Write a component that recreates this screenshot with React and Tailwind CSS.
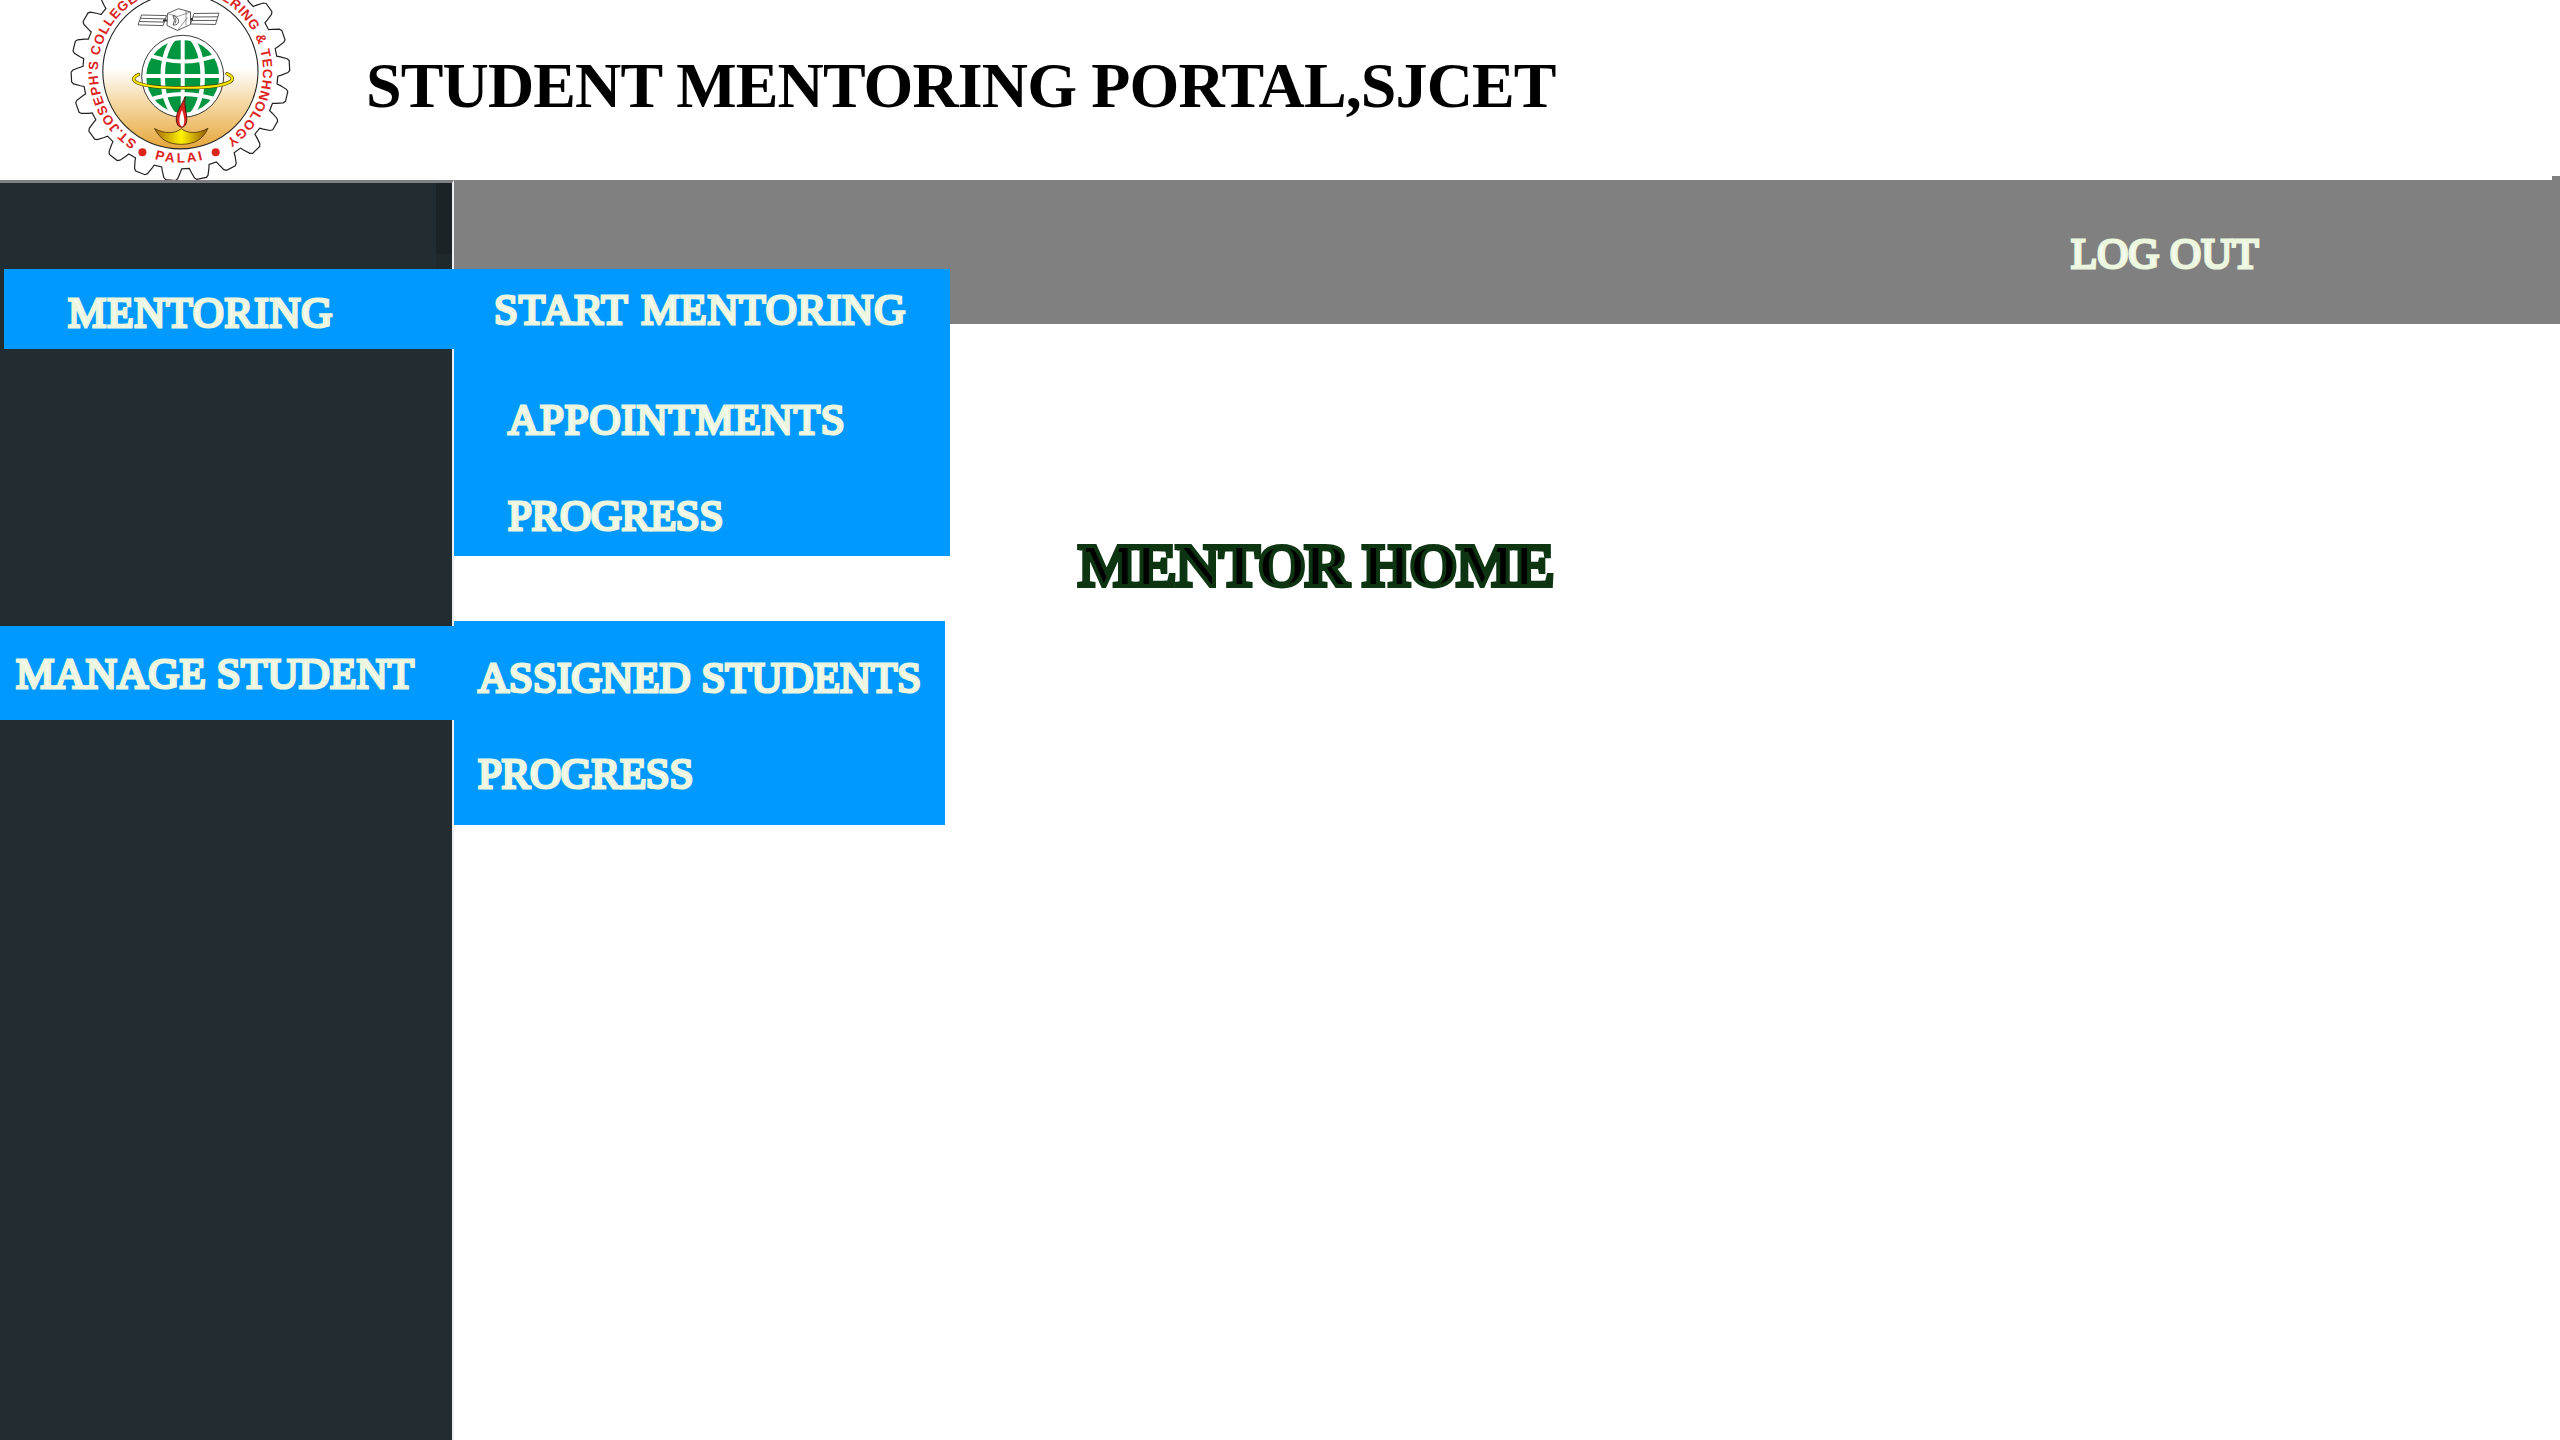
import React from "react";

const CX = 180.4;
const CY = 71.3;

function polar(r, deg) {
  const a = (deg * Math.PI) / 180;
  return `${(CX + r * Math.sin(a)).toFixed(2)} ${(CY + r * Math.cos(a)).toFixed(2)}`;
}

function gearPath() {
  const step = 360 / 22;
  const points = [];
  for (let i = 0; i < 22; i++) {
    const c = 11.2 + i * step;
    points.push(polar(97.5, c - 5.9), polar(101, c - 5.2), polar(107.5, c - 3.7), polar(109.3, c - 2.6));
    points.push(polar(109.3, c + 2.6), polar(107.5, c + 3.7), polar(101, c + 5.2), polar(97.5, c + 5.9));
  }
  return `M${points.join("L")}Z`;
}

function Logo() {
  return (
    <svg className="block h-[180px] w-[300px]" viewBox="0 0 300 180">
      <defs>
        <linearGradient id="disc" x1="0" y1="0" x2="0" y2="1">
          <stop offset="0.48" stopColor="#ffffff" />
          <stop offset="0.7" stopColor="#f5d9a6" />
          <stop offset="1" stopColor="#e6a63a" />
        </linearGradient>
        <linearGradient id="lamp" x1="0" y1="0" x2="1" y2="0">
          <stop offset="0" stopColor="#a5680c" />
          <stop offset="0.5" stopColor="#fff200" />
          <stop offset="1" stopColor="#8f5606" />
        </linearGradient>
        <clipPath id="globe">
          <circle cx="182.7" cy="76.5" r="37" />
        </clipPath>
        <path id="ring-top" d={`M${polar(82.6, -31.5)}A82.6 82.6 0 1 1 ${polar(82.6, 32)}`} />
        <path id="ring-bottom" d={`M${polar(91.3, -16.5)}A91.3 91.3 0 0 0 ${polar(91.3, 20)}`} />
      </defs>

      <path d={gearPath()} fill="#fff" stroke="#222" strokeWidth="1.2" />
      <circle cx={CX} cy={CY} r="77.6" fill="url(#disc)" stroke="#222" strokeWidth="1.1" />

      <g fill="#dc241f" fontFamily="'Liberation Sans', Arial, sans-serif" fontWeight="700" fontSize="13.4">
        <text>
          <textPath href="#ring-top" textLength="424" lengthAdjust="spacing">
            ST.JOSEPH'S COLLEGE OF ENGINEERING &amp; TECHNOLOGY
          </textPath>
        </text>
        <text>
          <textPath href="#ring-bottom" textLength="49" lengthAdjust="spacing">PALAI</textPath>
        </text>
        <circle cx="142.4" cy="152.3" r="4" />
        <circle cx="215.7" cy="152.3" r="4" />
      </g>

      <g fill="#fff" stroke="#333" strokeWidth="0.8">
        <path d="M141.5 15l25 .6-3.5 10-25-.7zM140.5 18.3l25 .6M139.5 21.5l25 .6" />
        <path d="M194 13.5l25-.3-3.5 11.3-25-.5zM193 17l25-.2M192 20.5l25-.1" />
        <path d="M163 20.500h5M188 19h5" strokeWidth="2" />
        <path d="M167.500 13.500l11-4.800 12 3.300v12.500l-13 6-10.500-5z" />
        <path d="M167.500 13.500l10 3 13-4.500M177.500 30.500l10-13M186 10.500v15" strokeWidth="0.5" />
        <path d="M173 15.500q6 2 5.500 6t-5.500 3.500q3-4.500 0-9.500M175 17.500q2 3 0 6" />
      </g>

      <circle cx="182.7" cy="76.3" r="41" fill="#fff" stroke="#222" strokeWidth="0.9" />
      <circle cx="182.7" cy="76.5" r="36.5" fill="#00953f" />
      <g clipPath="url(#globe)" fill="none" stroke="#fff" strokeWidth="4">
        <path d="M182.700 35v83M144 76h78" />
        <ellipse cx="182.700" cy="76.500" rx="20" ry="42" strokeWidth="4.500" />
        <path d="M146 54q36.700 15 74 0M146 101q36.700 -14 74 0" strokeWidth="4" />
      </g>

      <path
        d="M138.500 74.500c-12 5.500 -3 13.300 44.500 13.300s57 -8.300 44 -14"
        fill="none"
        stroke="#4a4300"
        strokeWidth="3.400"
        strokeLinecap="round"
      />
      <path
        d="M138.500 74.500c-12 5.500 -3 13.300 44.500 13.300s57 -8.300 44 -14"
        fill="none"
        stroke="#f7e600"
        strokeWidth="2.100"
        strokeLinecap="round"
      />

      <path
        d="M154.500 128.500c10 5.500 20 5.500 26.800 .2c7 5.300 17 5 26.700 -.4c-5 11 -13 16 -27 16s-21 -5.500 -26.500 -15.800z"
        fill="url(#lamp)"
        stroke="#4a3200"
        strokeWidth="0.8"
      />
      <path d="M185 97c-3 7 -8.700 15 -8.700 22c0 11 10.500 11 10.500 0c0 -7 -3 -13 -1.800 -22z" fill="#dc241f" stroke="#4d0a08" strokeWidth="0.9" />
      <path d="M182 110c-3 6 -3.800 15 0 16.500c3.500 -1.500 2.500 -10 0 -16.500z" fill="#fff" />
    </svg>
  );
}

const MENU_TEXT = "block whitespace-nowrap text-[43px] leading-none text-white [-webkit-text-stroke:3px_#ecf6df]";

export default function App() {
  return (
    <div className="flex h-[1440px] w-[2560px] flex-col overflow-hidden bg-white font-['Liberation_Serif',serif]">
      <header className="relative flex h-[180px] shrink-0">
        <Logo />
        <h1 className="ml-[66px] mt-[54px] whitespace-nowrap text-[64px] font-bold leading-none tracking-[-0.87px] text-black">
          STUDENT MENTORING PORTAL,SJCET
        </h1>
        <span className="absolute bottom-0 right-0 h-1 w-2 bg-[#808080]" />
      </header>

      <div className="flex flex-1">
        <aside className="relative z-10 flex w-[454px] shrink-0 flex-col border-r-2 border-t-[3px] border-r-[#eceef2] border-t-[#808080] bg-[#222d32]">
          <div className="ml-[436px] h-[71px] w-4 bg-[#1c2326]" />
          <div className="ml-[436px] h-[15px] w-4 bg-[#1f282b]" />

          <nav>
            <div className="relative ml-1 h-20 w-[450px] bg-[#0099ff] pl-[64px] pt-[22px]">
              <span className={`${MENU_TEXT} tracking-[0.9px]`}>MENTORING</span>
              <div className="absolute left-full top-0 h-[287px] w-[496px] bg-[#0099ff]">
                <span className={`${MENU_TEXT} ml-[40px] mt-[19px] tracking-[0.85px] [word-spacing:2px]`}>START MENTORING</span>
                <span className={`${MENU_TEXT} ml-[54px] mt-[67px] tracking-[0.85px]`}>APPOINTMENTS</span>
                <span className={`${MENU_TEXT} ml-[54px] mt-[53px] tracking-[-0.3px]`}>PROGRESS</span>
              </div>
            </div>

            <div className="relative mt-[277px] h-[94px] w-[454px] bg-[#0099ff] pl-[16px] pt-[26px]">
              <span className={`${MENU_TEXT} tracking-[0.2px]`}>MANAGE STUDENT</span>
              <div className="absolute -top-[5px] left-full h-[204px] w-[491px] bg-[#0099ff]">
                <span className={`${MENU_TEXT} ml-[24px] mt-[35px] tracking-[0px]`}>ASSIGNED STUDENTS</span>
                <span className={`${MENU_TEXT} ml-[24px] mt-[53px] tracking-[-0.3px]`}>PROGRESS</span>
              </div>
            </div>
          </nav>
        </aside>

        <main className="flex-1">
          <div className="flex h-36 justify-end bg-[#808080] pr-[300px] pt-[52px]">
            <div className="w-[189px]">
              <span className={`${MENU_TEXT} tracking-[0px]`}>LOG OUT</span>
            </div>
          </div>
          <h2 className="ml-[624px] mt-[210px] whitespace-nowrap text-[62px] font-bold leading-none tracking-[-1.3px] text-black [-webkit-text-stroke:4px_#0d3512]">
            MENTOR HOME
          </h2>
        </main>
      </div>
    </div>
  );
}
